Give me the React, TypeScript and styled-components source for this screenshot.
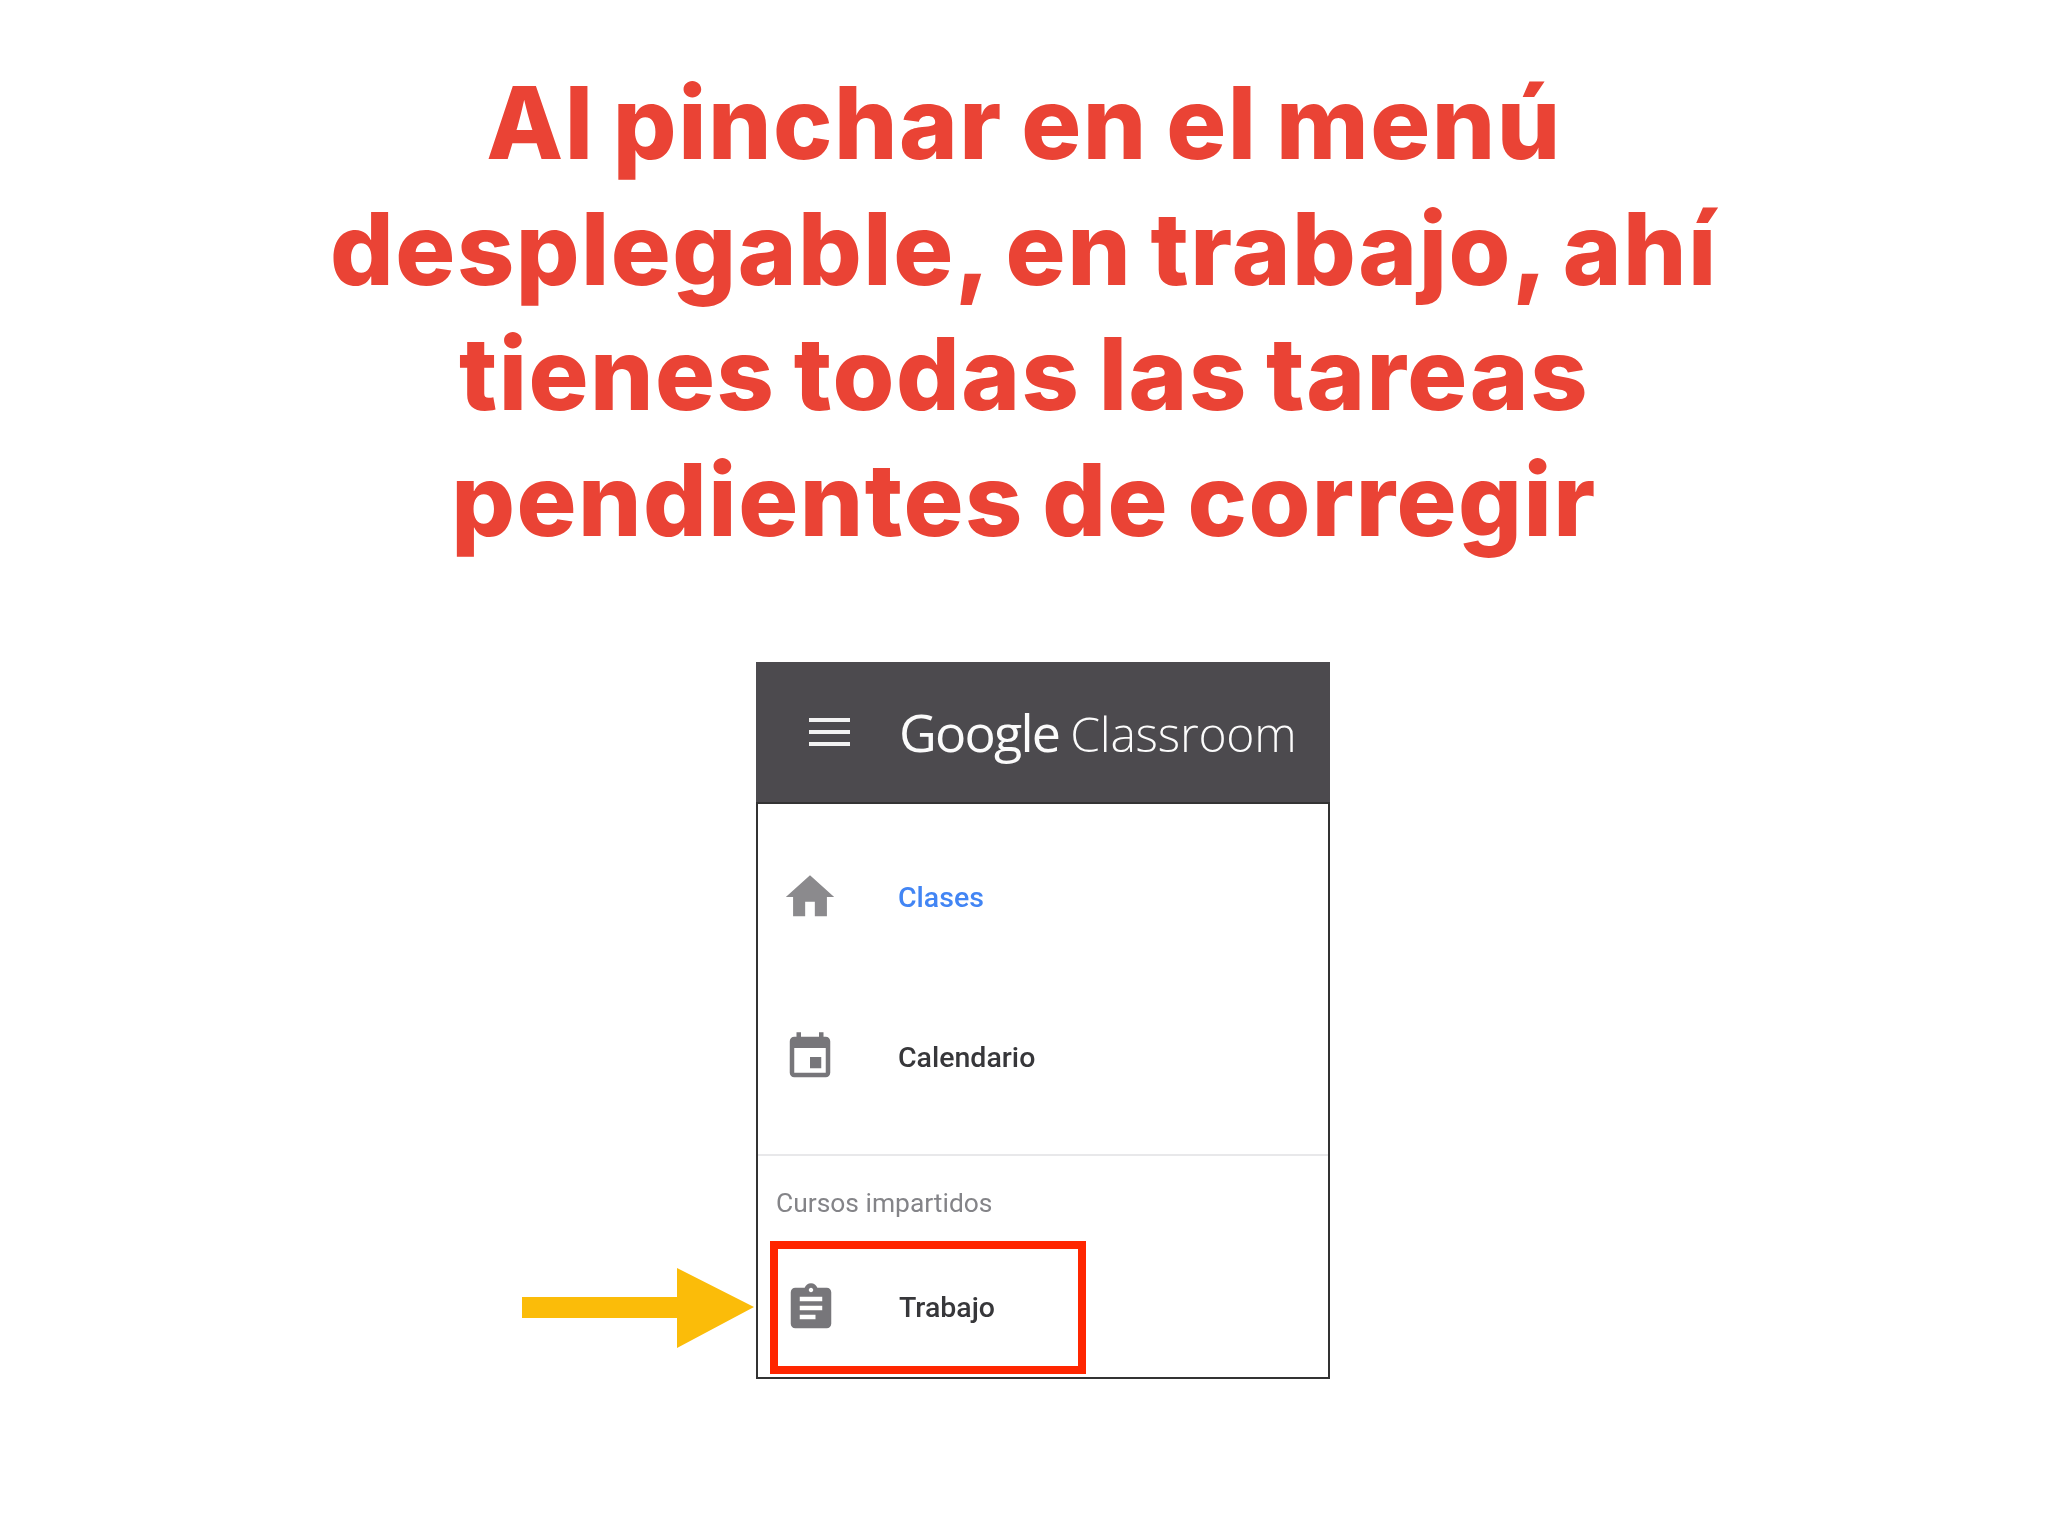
import React from 'react';
import styled, { createGlobalStyle } from 'styled-components';

const GlobalStyle = createGlobalStyle`
  html, body {
    margin: 0;
    background: #fff;
  }
`;

const Page = styled.main`
  width: 2048px;
  height: 1536px;
  box-sizing: border-box;
  padding-top: 60px;
  overflow: hidden;
`;

const Title = styled.h1`
  margin: 0;
  text-align: center;
  font-family: 'Inter', 'Liberation Sans', sans-serif;
  font-weight: 800;
  font-size: 100px;
  line-height: 125.5px;
  letter-spacing: 1.5px;
  word-spacing: -5px;
  color: #ea4335;
`;

const Panel = styled.section`
  position: relative;
  width: 574px;
  margin: 100px 0 0 756px;
  font-family: 'Roboto', 'Liberation Sans', sans-serif;
`;

const Header = styled.header`
  display: flex;
  align-items: center;
  height: 140px;
  padding-left: 53px;
  background: #4c4a4e;
`;

const Hamburger = styled.span`
  display: flex;
  flex-direction: column;
  gap: 8px;
  width: 41px;
  margin-right: 49px;
  filter: blur(0.5px);

  i {
    display: block;
    height: 4px;
    background: #f2f2f2;
  }
`;

const Logo = styled.div`
  display: flex;
  align-items: baseline;
  gap: 11px;
  color: #fbfbfb;
  font-family: 'Open Sans', sans-serif;
  line-height: 1;
  filter: blur(0.5px);
`;

const LogoWord = styled.span`
  font-size: 52px;
  letter-spacing: -1.8px;
`;

const LogoProduct = styled.span`
  font-size: 48px;
  font-weight: 300;
  letter-spacing: -0.2px;
`;

const Body = styled.div`
  padding: 13px 0 3px;
  border: 2px solid #333;
`;

const NavRow = styled.div`
  display: flex;
  align-items: center;
  height: 160px;
  padding-left: 19px;
`;

const NavIcon = styled.svg<{ $size: number; $shift?: number }>`
  flex: 0 0 ${(props) => props.$size}px;
  width: ${(props) => props.$size}px;
  height: ${(props) => props.$size}px;
  margin-left: ${(props) => (66 - props.$size) / 2 + (props.$shift || 0)}px;
  margin-right: ${(props) => 56 + (66 - props.$size) / 2 - (props.$shift || 0)}px;
  fill: ${(props) => props.color};
  filter: blur(0.5px);
`;

const NavLabel = styled.span<{ $active?: boolean }>`
  margin-left: -1px;
  font-size: 28.5px;
  font-weight: 500;
  color: ${(props) => (props.$active ? '#4285f4' : '#37373a')};
  filter: blur(0.5px);
`;

const Divider = styled.hr`
  margin: 17px 0 0;
  border: 0;
  border-top: 2px solid #e8e8ea;
`;

const SectionLabel = styled.div`
  padding: 31px 0 0 18px;
  font-size: 26.4px;
  line-height: 32px;
  color: #848488;
  filter: blur(0.5px);
`;

const HighlightRow = styled(NavRow)`
  width: 316px;
  height: 133px;
  box-sizing: border-box;
  margin: 22px 0 0 12px;
  padding-left: 0;
  border: 8px solid #ff2600;
`;

const Arrow = styled.svg`
  position: absolute;
  left: -234px;
  bottom: 31px;
  width: 232px;
  height: 80px;
  fill: #fbbc09;
`;

const HomeIcon = () => (
  <NavIcon viewBox="0 0 24 24" color="#8b8a8d" $size={58}>
    <path d="M10 20v-6h4v6h5v-8h3L12 3 2 12h3v8z" />
  </NavIcon>
);

const CalendarIcon = () => (
  <NavIcon viewBox="0 0 24 24" color="#77767a" $size={54}>
    <path d="M17 12h-5v5h5v-5zM16 1v2H8V1H6v2H5c-1.11 0-1.99.9-1.99 2L3 19c0 1.1.89 2 2 2h14c1.1 0 2-.9 2-2V5c0-1.1-.9-2-2-2h-1V1h-2zm3 18H5V8h14v11z" />
  </NavIcon>
);

const AssignmentIcon = () => (
  <NavIcon viewBox="0 0 24 24" color="#77767a" $size={54}>
    <path d="M19 3h-4.18C14.4 1.84 13.3 1 12 1c-1.3 0-2.4.84-2.82 2H5c-1.1 0-2 .9-2 2v14c0 1.1.9 2 2 2h14c1.1 0 2-.9 2-2V5c0-1.1-.9-2-2-2zm-7 0c.55 0 1 .45 1 1s-.45 1-1 1-1-.45-1-1 .45-1 1-1zm2 14H7v-2h7v2zm3-4H7v-2h10v2zm0-4H7V7h10v2z" />
  </NavIcon>
);

export default function App() {
  return (
    <Page>
      <GlobalStyle />
      <Title>
        Al pinchar en el menú
        <br />
        desplegable, en trabajo, ahí
        <br />
        tienes todas las tareas
        <br />
        pendientes de corregir
      </Title>

      <Panel>
        <Header>
          <Hamburger>
            <i />
            <i />
            <i />
          </Hamburger>
          <Logo>
            <LogoWord>Google</LogoWord>
            <LogoProduct>Classroom</LogoProduct>
          </Logo>
        </Header>

        <Body>
          <NavRow>
            <HomeIcon />
            <NavLabel $active>Clases</NavLabel>
          </NavRow>
          <NavRow>
            <CalendarIcon />
            <NavLabel>Calendario</NavLabel>
          </NavRow>
          <Divider />
          <SectionLabel>Cursos impartidos</SectionLabel>
          <HighlightRow>
            <AssignmentIcon />
            <NavLabel>Trabajo</NavLabel>
          </HighlightRow>
        </Body>

        <Arrow viewBox="0 0 232 80">
          <path d="M0 29h155V0l77 39-77 41V50H0z" />
        </Arrow>
      </Panel>
    </Page>
  );
}
